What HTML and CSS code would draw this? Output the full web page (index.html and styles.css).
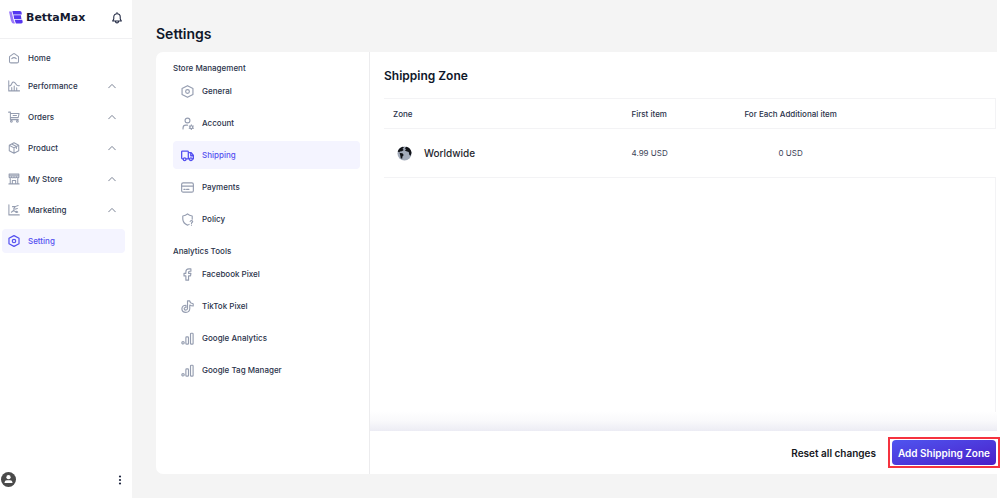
FILE: index.html
```html
<!DOCTYPE html>
<html lang="en">
<head>
    <meta charset="UTF-8">
    <meta name="viewport" content="width=device-width, initial-scale=1.0">
    <title>BettaMax - Settings</title>
    <link rel="stylesheet" href="styles.css">
</head>
<body>
    <svg class="sprite" aria-hidden="true">
        <symbol id="chevron" viewBox="0 0 8 8"><path d="M.7 5.800 4 2.400l3.300 3.400"/></symbol>
        <symbol id="hexagon" viewBox="0 0 16 16">
            <path d="M8 .8 14.700 4.400v7.200L8 15.200 1.300 11.600V4.400z"/>
            <circle cx="8" cy="8" r="2.300"/>
        </symbol>
        <symbol id="bars" viewBox="0 0 16 16">
            <circle cx="2.500" cy="13.300" r="1.500"/>
            <rect x="6" y="6" width="3.200" height="9" rx="1"/>
            <rect x="11.700" y="1.500" width="3.200" height="13.500" rx="1"/>
        </symbol>
    </svg>

    <aside class="sidebar">
        <div class="brand">
            <svg class="logo" viewBox="0 0 14 13">
                <path class="stem" d="M0 .5h2.600l2 8.500 1.400 3.500H4.500Q2.500 12 1.900 9.500z"/>
                <path d="M3.400 0h7.600q1.500.2 1.600 1.500l.2 2H4.100z"/>
                <path d="M4.500 4.300h7.400l.5 3.600H5.200z"/>
                <path d="M5.600 8.700h7.600l.5 2.200q0 1.400-1.500 1.600H6.900z"/>
            </svg>
            <span class="brand-name">BettaMax</span>
            <button class="icon-btn bell" aria-label="Notifications">
                <svg class="icon" viewBox="0 0 16 16"><path d="M8 2.200a4.300 4.300 0 0 0-4.300 4.300v2.700L2.200 12h11.600l-1.500-2.800V6.500A4.300 4.300 0 0 0 8 2.200zM8 .8v1.400M6 12.500a2 2 0 0 0 4 0"/></svg>
            </button>
        </div>

        <nav class="menu">
            <a class="menu-item" href="#">
                <svg class="icon" viewBox="0 0 16 16"><path d="M2 6.200 7 2.500q1-.7 2 0l5 3.700v6.300q0 2-2 2H4q-2 0-2-2zM5 8.800q3-2.600 6 0"/></svg>
                <span>Home</span>
            </a>
            <div class="menu-group">
                <a class="menu-item" href="#">
                    <svg class="icon" viewBox="0 0 16 16"><path d="M1 1v13.500h14.500M1.500 8q2.500 0 3.500-3t3-2 3 3 4 1.500M5 14.500V10M8.300 14.500V8M11.600 14.500v-4"/></svg>
                    <span>Performance</span>
                    <svg class="chevron"><use href="#chevron"/></svg>
                </a>
                <a class="menu-item" href="#">
                    <svg class="icon" viewBox="0 0 16 16"><path d="M.8 1.500h2.400v10h10.500M3.200 3.200h11.600l-1.200 5.600H3.200M6.800 6h4.500"/><circle cx="4.500" cy="13.800" r="1.200"/><circle cx="12.500" cy="13.800" r="1.200"/></svg>
                    <span>Orders</span>
                    <svg class="chevron"><use href="#chevron"/></svg>
                </a>
                <a class="menu-item" href="#">
                    <svg class="icon" viewBox="0 0 16 16"><path d="M8 1 14.300 4.300v7.400L8 15l-6.300-3.300V4.300zM1.700 4.300 8 7.800l6.300-3.500M8 7.800V15M4.900 2.700l6.300 3.400v2.500"/></svg>
                    <span>Product</span>
                    <svg class="chevron"><use href="#chevron"/></svg>
                </a>
                <a class="menu-item" href="#">
                    <svg class="icon" viewBox="0 0 16 16"><path d="M1.500 1.500h13v4q-1.100 1.800-3.200 0-1.600 1.800-3.300 0-1.700 1.800-3.300 0-2.100 1.800-3.200 0zM1.500 3.800h13M3 6.800v7.700h10V6.800M5.800 14.500V10h4.400v4.500M1.200 14.500h13.600"/></svg>
                    <span>My Store</span>
                    <svg class="chevron"><use href="#chevron"/></svg>
                </a>
                <a class="menu-item" href="#">
                    <svg class="icon" viewBox="0 0 16 16"><path d="M1.200 1v13.500H15M4.500 11l3-2.500 3 2.200h2.500M6 3.500h3.500l-2 3.300M9.500 3.500 13.500 2M9 7l3.500-1"/><circle cx="11.500" cy="10.500" r=".8"/></svg>
                    <span>Marketing</span>
                    <svg class="chevron"><use href="#chevron"/></svg>
                </a>
                <a class="menu-item active" href="#">
                    <svg class="icon"><use href="#hexagon"/></svg>
                    <span>Setting</span>
                </a>
            </div>
        </nav>

        <div class="user">
            <svg class="avatar" viewBox="0 0 16 16">
                <circle cx="8" cy="8" r="8"/>
                <circle class="face" cx="8" cy="5.500" r="2.300"/>
                <path class="face" d="M3.800 11.800V11Q4 8.800 6.200 8.800h3.600Q12 8.800 12.200 11v.8z"/>
            </svg>
            <button class="icon-btn" aria-label="Account menu">
                <svg class="dots" viewBox="0 0 4 10"><circle cx="2" cy="1.500" r="1.100"/><circle cx="2" cy="5" r="1.100"/><circle cx="2" cy="8.500" r="1.100"/></svg>
            </button>
        </div>
    </aside>

    <main class="content">
        <h1>Settings</h1>
        <div class="card">
            <nav class="settings-nav">
                <h3>Store Management</h3>
                <a class="settings-item" href="#">
                    <svg class="icon"><use href="#hexagon"/></svg>
                    <span>General</span>
                </a>
                <a class="settings-item" href="#">
                    <svg class="icon" viewBox="0 0 16 16"><circle cx="8" cy="4.300" r="3"/><path d="M2.500 14.800v-1.300q0-3.500 3.500-3.500h2"/><circle cx="12.700" cy="12.500" r="1.800"/><path d="M12.700 9.700v.8M12.700 14.500v.8M10.200 11.100l.8.400M14.400 13.500l.8.400M10.200 13.900l.8-.4M14.400 11.500l.8-.4"/></svg>
                    <span>Account</span>
                </a>
                <a class="settings-item active" href="#">
                    <svg class="icon" viewBox="0 0 16 16"><path d="M2.500 12.200H1.700q-.9 0-.9-1V3.500q0-1 1-1H8q1 0 1 1v8.700H6.500M9 4.500h3.500L15.300 8v4.200h-1.200M10.500 12.200H9M12 8.300h3.300M12 4.700v3.600"/><circle cx="4.500" cy="12.500" r="1.700"/><circle cx="12.200" cy="12.500" r="1.700"/></svg>
                    <span>Shipping</span>
                </a>
                <a class="settings-item" href="#">
                    <svg class="icon" viewBox="0 0 16 16"><rect x=".8" y="2.300" width="14.400" height="11.400" rx="1.800"/><path d="M.8 6.300h14.400M3.500 10.300h1.700M6.800 10.300h3"/></svg>
                    <span>Payments</span>
                </a>
                <a class="settings-item" href="#">
                    <svg class="icon" viewBox="0 0 16 16"><path d="M10 14q-1 .8-2 .9-5.500-2.300-5.800-7.400V3.700Q5.800 3.500 8 1.200q2.200 2.300 5.800 2.500v4M11.300 10.500q.2-1.300 1.600-1.300 1.500.1 1.500 1.400 0 .8-1.500 1.600v.6M12.900 14.700v.3"/></svg>
                    <span>Policy</span>
                </a>

                <h3>Analytics Tools</h3>
                <a class="settings-item" href="#">
                    <svg class="icon" viewBox="0 0 16 16"><path d="M6 15V9.700H3.700V6.600H6V4.700Q6 1 9.700 1h2.500v3h-1.700q-1.200 0-1.200 1.200v1.400h2.900l-.5 3.100H9.300V15z"/></svg>
                    <span>Facebook Pixel</span>
                </a>
                <a class="settings-item" href="#">
                    <svg class="icon" viewBox="0 0 16 16"><path d="M8 1h2.700q.3 3.300 4.300 3.600v2.800q-2.500 0-4.200-1.200v4.500Q10.500 15 6 15.200 1.300 15 1.100 10.900q.3-4.400 5-4.400v2.800q-2.100-.2-2.200 1.500.1 1.600 1.900 1.700 2.100-.1 2.200-2z"/></svg>
                    <span>TikTok Pixel</span>
                </a>
                <a class="settings-item" href="#">
                    <svg class="icon"><use href="#bars"/></svg>
                    <span>Google Analytics</span>
                </a>
                <a class="settings-item" href="#">
                    <svg class="icon"><use href="#bars"/></svg>
                    <span>Google Tag Manager</span>
                </a>
            </nav>

            <section class="panel">
                <div class="panel-body">
                    <h2>Shipping Zone</h2>
                    <table>
                        <thead>
                            <tr>
                                <th class="col-zone">Zone</th>
                                <th class="col-first">First item</th>
                                <th class="col-extra">For Each Additional item</th>
                                <th></th>
                            </tr>
                        </thead>
                        <tbody>
                            <tr>
                                <td>
                                    <div class="zone">
                                        <svg class="globe" viewBox="0 0 16 16">
                                            <circle cx="8" cy="8" r="7.500"/>
                                            <path d="M.8 5.800Q2 2 6 .8L7.500 1.500 5.800 2.800l1.400 1.400-2 1.300-2 .3-.8 1.200zM2.800 7.500l3 .2 1.400 1.800-1.400 1.600-.3 2.600-1.500-.7-.5-2.800z"/>
                                            <path d="M8.200 2.500 10 .8q4.700 1.200 5.500 6.400l-1 3.300-1.300-1-.7-3-2.500-.8-1.800-1.200 1.700-1z"/>
                                        </svg>
                                        <span>Worldwide</span>
                                    </div>
                                </td>
                                <td>4.99 USD</td>
                                <td class="col-extra">0 USD</td>
                                <td></td>
                            </tr>
                        </tbody>
                    </table>
                    <div class="table-rest"></div>
                </div>
                <div class="panel-footer">
                    <button class="reset-btn">Reset all changes</button>
                    <div class="highlight">
                        <button class="add-btn">Add Shipping Zone</button>
                    </div>
                </div>
            </section>
        </div>
    </main>
</body>
</html>
```

FILE: styles.css
```css
* {
    box-sizing: border-box;
}
body {
    margin: 0;
    padding: 0 3px 2px 0;
    min-height: 100vh;
    display: flex;
    font-family: Inter, "Liberation Sans", sans-serif;
    font-size: 8px;
    font-weight: 500;
    line-height: 16px;
    color: #2a324a;
    background: #fff;
}
h1, h2, h3 {
    margin: 0;
    color: #0f172a;
}
a {
    color: inherit;
    text-decoration: none;
}
button {
    font-family: inherit;
    border: none;
    background: none;
    padding: 0;
    cursor: pointer;
}
.sprite {
    display: none;
}
.icon {
    width: 12px;
    height: 12px;
    flex: none;
    fill: none;
    stroke: #959db0;
    stroke-width: 1.4;
    stroke-linecap: round;
    stroke-linejoin: round;
}

/* sidebar */
.sidebar {
    width: 132px;
    flex: none;
    display: flex;
    flex-direction: column;
}
.brand {
    height: 39px;
    display: flex;
    align-items: center;
    padding: 0 9px 3px;
    border-bottom: 1px solid #f0f0f2;
}
.logo {
    width: 14px;
    height: 13px;
    margin-right: 3px;
    fill: #5636f0;
}
.logo .stem {
    fill: #9a78fa;
}
.brand-name {
    font-family: "DejaVu Sans", sans-serif;
    font-size: 11px;
    font-weight: bold;
    color: #151a30;
}
.icon-btn {
    display: flex;
    margin-left: auto;
}
.bell .icon {
    stroke: #1e2640;
}
.menu {
    padding: 7px 7px 0 2px;
}
.menu-group {
    display: flex;
    flex-direction: column;
    gap: 7px;
    padding-top: 4px;
}
.menu-item {
    height: 24px;
    display: flex;
    align-items: center;
    gap: 8px;
    padding: 0 9px 0 6px;
    border-radius: 4px;
}
.chevron {
    width: 8px;
    height: 8px;
    margin-left: auto;
    fill: none;
    stroke: #7c8496;
    stroke-linecap: round;
}
.active {
    color: #5450f0;
    background: #f4f4ff;
}
.active .icon {
    stroke: #5450f0;
    stroke-width: 1.6;
}
.user {
    margin-top: auto;
    display: flex;
    align-items: center;
    padding: 0 10px 11px 1px;
}
.avatar {
    width: 15px;
    height: 15px;
    fill: #4a4a4a;
}
.avatar .face {
    fill: #fff;
}
.dots {
    width: 4px;
    height: 10px;
    fill: #1e2640;
}

/* settings page */
.content {
    flex: 1;
    min-width: 0;
    display: flex;
    flex-direction: column;
    padding: 24px 0 24px 24px;
    background: #f4f4f4;
}
h1 {
    font-size: 14px;
    font-weight: 600;
    line-height: 20px;
    margin-bottom: 8px;
}
.card {
    flex: 1;
    display: flex;
    background: #fff;
    border-radius: 7px 0 0 7px;
}
.settings-nav {
    width: 214px;
    flex: none;
    display: flex;
    flex-direction: column;
    gap: 4px;
    padding: 8px 9px 0 17px;
    border-right: 1px solid #ececee;
}
h3 {
    font-size: 8px;
    font-weight: 500;
    color: #2a324a;
    margin-bottom: -3px;
}
.settings-item + h3 {
    margin-top: 6px;
}
.settings-item {
    height: 28px;
    display: flex;
    align-items: center;
    gap: 8px;
    padding: 0 8px;
    border-radius: 4px;
}
.settings-item .icon {
    width: 13px;
    height: 13px;
}

/* shipping zone */
.panel {
    flex: 1;
    min-width: 0;
    display: flex;
    flex-direction: column;
}
.panel-body {
    flex: 1;
    display: flex;
    flex-direction: column;
    padding: 14px 1px 19px 14px;
    background: linear-gradient(to top, #ececf4, #f9f9fb 10px, #fff 20px);
}
h2 {
    font-size: 12px;
    font-weight: 600;
    line-height: 20px;
    margin-bottom: 12px;
}
table {
    width: 100%;
    table-layout: fixed;
    border-collapse: collapse;
    font-size: 8px;
}
th, td {
    padding: 0 9px;
    text-align: left;
}
th {
    height: 30px;
    font-weight: 500;
    border-top: 1px solid #f3f3f5;
    border-bottom: 1px solid #f3f3f5;
}
th:last-child {
    border-right: 1px solid #f3f3f5;
}
td {
    height: 49px;
    font-weight: 400;
    color: #3c4358;
    border-bottom: 1px solid #f3f3f5;
}
.col-zone {
    width: 39%;
}
.col-first {
    width: 18%;
}
.col-extra {
    width: 19%;
    text-align: center;
    white-space: nowrap;
}
.zone {
    display: flex;
    align-items: center;
    gap: 12px;
    padding-left: 4px;
    font-size: 10px;
    font-weight: 500;
    color: #26282e;
}
.globe {
    width: 15px;
    height: 15px;
    fill: #111318;
}
.globe circle {
    fill: #a3abba;
}
.table-rest {
    flex: 1;
    border-right: 1px solid #f3f3f5;
}
.panel-footer {
    height: 43px;
    display: flex;
    align-items: center;
    justify-content: flex-end;
    gap: 12px;
    background: #fff;
}
.reset-btn {
    font-size: 10px;
    font-weight: 600;
    color: #15171c;
}
.highlight {
    margin-right: -3px;
    padding: 1px 2px;
    border: 2px solid #f5333f;
}
.add-btn {
    display: block;
    height: 25px;
    padding: 0 6px;
    font-size: 10px;
    font-weight: 600;
    color: #fff;
    border-radius: 4px;
    background: linear-gradient(to bottom right, #4f55f0, #4a1fc8);
}
```
